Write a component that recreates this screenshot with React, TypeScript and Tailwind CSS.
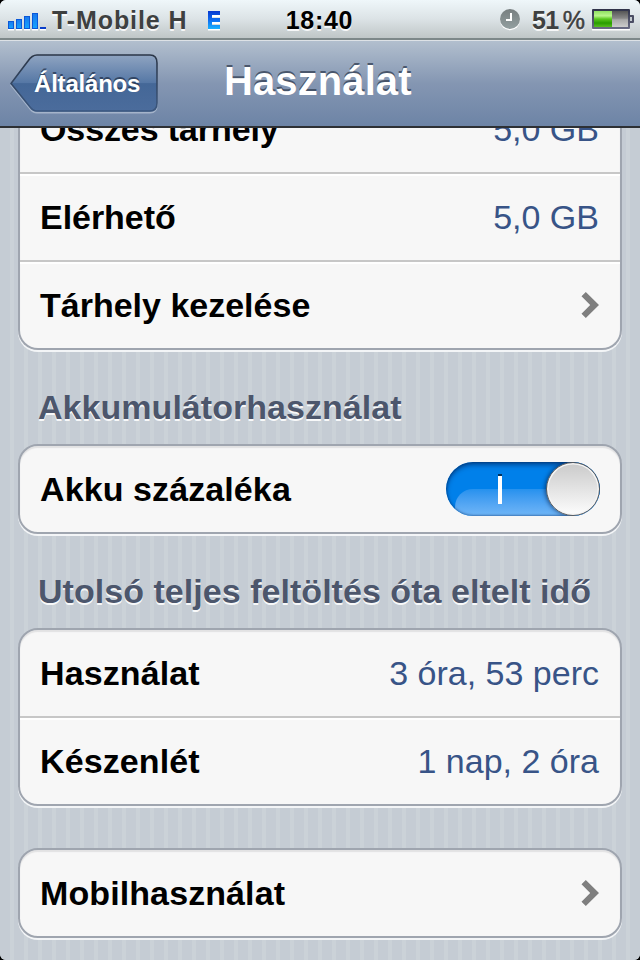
import type { ReactNode } from 'react';

function SignalBars() {
    return (
        <svg width="40" height="20" viewBox="0 0 40 20" className="shrink-0" aria-hidden="true">
            <defs>
                <linearGradient id="signal" x1="0" y1="0" x2="0" y2="1">
                    <stop offset="0" stopColor="#1a78ee" />
                    <stop offset="1" stopColor="#14a4ff" />
                </linearGradient>
            </defs>
            <path d="M0 17h6v1.5H0zM8 17h6v1.5H8zM16 17h6v1.5h-6zM24 17h6v1.5h-6zM32 17h6v1.5h-6z" fill="#fff" />
            <g fill="url(#signal)" stroke="#0a58d8" strokeWidth="1">
                <rect x="0.5" y="9.5" width="5" height="7" />
                <rect x="8.5" y="7.5" width="5" height="9" />
                <rect x="16.5" y="4.5" width="5" height="12" />
                <rect x="24.5" y="1.5" width="5" height="15" />
            </g>
            <rect x="32" y="15" width="6" height="2" fill="#0b3fca" />
        </svg>
    );
}

function EdgeIcon() {
    return (
        <svg width="12" height="20" viewBox="0 0 12 20" className="shrink-0" aria-hidden="true">
            <defs>
                <linearGradient id="edge" x1="0" y1="0" x2="0" y2="1">
                    <stop offset="0" stopColor="#0838cf" />
                    <stop offset="0.5" stopColor="#0d6cf0" />
                    <stop offset="1" stopColor="#19b2ff" />
                </linearGradient>
            </defs>
            <path d="M4 4h8v2H4zM4 11h8v2H4zM0 18h12v1.5H0z" fill="#fff" />
            <path d="M0 0h12v4H4v3h8v4H4v3h8v4H0z" fill="url(#edge)" />
        </svg>
    );
}

function ClockIcon() {
    return (
        <svg width="20" height="22" viewBox="0 0 20 22" className="shrink-0" aria-hidden="true">
            <defs>
                <linearGradient id="clock" x1="0" y1="0" x2="0" y2="1">
                    <stop offset="0" stopColor="#777f80" />
                    <stop offset="1" stopColor="#939fa0" />
                </linearGradient>
            </defs>
            <circle cx="10" cy="11.3" r="10" fill="#fff" />
            <circle cx="10" cy="10" r="10" fill="url(#clock)" />
            <path d="M11 4v7H6" fill="none" stroke="#fff" strokeWidth="2" />
        </svg>
    );
}

function BatteryIcon() {
    return (
        <svg width="42" height="22" viewBox="0 0 42 22" className="shrink-0" aria-hidden="true">
            <defs>
                <linearGradient id="charge" x1="0" y1="0" x2="0" y2="1">
                    <stop offset="0" stopColor="#8fe060" />
                    <stop offset="0.3" stopColor="#b9f58c" />
                    <stop offset="0.5" stopColor="#5ac71e" />
                    <stop offset="0.75" stopColor="#289c00" />
                    <stop offset="1" stopColor="#58bd20" />
                </linearGradient>
                <linearGradient id="empty" x1="0" y1="0" x2="0" y2="1">
                    <stop offset="0" stopColor="#555" />
                    <stop offset="0.45" stopColor="#888" />
                    <stop offset="0.55" stopColor="#aaa" />
                    <stop offset="1" stopColor="#ccc" />
                </linearGradient>
                <linearGradient id="shell" x1="0" y1="0" x2="0" y2="1">
                    <stop offset="0" stopColor="#2f3249" />
                    <stop offset="1" stopColor="#696b84" />
                </linearGradient>
            </defs>
            <path d="M0 19.5h38v2H0z" fill="#fff" />
            <rect x="37" y="6" width="5" height="8" rx="1" fill="#4b4e64" />
            <rect x="38" y="8" width="2" height="4" fill="#c4cbd0" />
            <rect width="38" height="20" rx="1" fill="url(#shell)" />
            <rect x="2" y="2" width="18" height="16" fill="url(#charge)" />
            <rect x="20" y="2" width="16" height="16" fill="url(#empty)" />
        </svg>
    );
}

function StatusBar() {
    return (
        <div className="flex h-10 items-start border-b-2 border-b-[#7d8889] bg-linear-to-b from-[#eff7fa] via-[#dce3e6] to-[#bfc6c7] text-[25px] leading-[40px] font-bold text-[#3e4040] [text-shadow:0_2px_0_rgba(255,255,255,0.85)]">
            <div className="flex w-[220px] pl-2">
                <div className="pt-3">
                    <SignalBars />
                </div>
                <span className="w-[160px] pl-1 tracking-[0.9px] whitespace-nowrap">T-Mobile H</span>
                <div className="pt-[11px]">
                    <EdgeIcon />
                </div>
            </div>
            <span className="w-[199px] text-center tracking-[0.7px] text-black">18:40</span>
            <div className="flex flex-1 justify-end pr-[6px]">
                <div className="pt-[9px]">
                    <ClockIcon />
                </div>
                <span className="w-[72px] pl-3 tracking-[-0.7px] whitespace-nowrap [word-spacing:-2px]">
                    51 <span className="font-normal [-webkit-text-stroke:0.5px_#3e4040]">%</span>
                </span>
                <div className="pt-[9px]">
                    <BatteryIcon />
                </div>
            </div>
        </div>
    );
}

function BackButton({ label }: { label: string }) {
    return (
        <button className="relative block h-[60px] w-[150px] text-left">
            <svg width="150" height="60" viewBox="0 0 150 60" className="absolute inset-0" aria-hidden="true">
                <defs>
                    <linearGradient id="back" x1="0" y1="0" x2="0" y2="1">
                        <stop offset="0" stopColor="#8fa4c1" />
                        <stop offset="0.5" stopColor="#5577a5" />
                        <stop offset="0.51" stopColor="#446797" />
                        <stop offset="1" stopColor="#4b6c9c" />
                    </linearGradient>
                    <linearGradient id="backEdge" x1="0" y1="0" x2="0" y2="1">
                        <stop offset="0" stopColor="#2b3647" />
                        <stop offset="1" stopColor="#3b577f" />
                    </linearGradient>
                </defs>
                <path
                    d="M27 1H140Q147 1 147 9V49Q147 57 140 57H27Q23 57 20 53L1 29.5L18 7Q22 1 27 1Z"
                    transform="translate(0 1.7)"
                    fill="none"
                    stroke="#a5b4ca"
                    strokeWidth="1.5"
                />
                <path
                    d="M27 1H140Q147 1 147 9V49Q147 57 140 57H27Q23 57 20 53L1 29.5L18 7Q22 1 27 1Z"
                    fill="url(#back)"
                    stroke="url(#backEdge)"
                    strokeWidth="1.6"
                />
            </svg>
            <span className="relative block pl-6 text-[24px] leading-[56px] font-bold tracking-[-0.2px] text-white [text-shadow:0_-2px_0_rgba(30,45,70,0.7)]">
                {label}
            </span>
        </button>
    );
}

function NavBar() {
    return (
        <header className="flex h-[88px] border-t border-b-2 border-t-[#dde2e6] border-b-[#2d3034] bg-linear-to-b from-[#b2bfce] via-[#8496b2] via-50% to-[#6d84a6] pt-[13px] pl-[10px]">
            <BackButton label="Általános" />
            <h1 className="pt-px pl-[64px] text-[40px] leading-[52px] font-bold tracking-[0.1px] text-white [text-shadow:0_-2px_0_rgba(50,62,82,0.75)]">
                Használat
            </h1>
        </header>
    );
}

function Group({ children, className = 'rounded-[20px] border-t-2' }: { children: ReactNode; className?: string }) {
    return (
        <section
            className={`mx-[18px] overflow-hidden border-x-2 border-b-2 border-[#9fa5af] bg-[#f7f7f7] shadow-[0_2px_0_#f3f5f7,inset_0_2px_1px_#e2e2e3] ${className}`}
        >
            {children}
        </section>
    );
}

interface RowProps {
    label: string;
    children: ReactNode;
    last?: boolean;
    tracking?: string;
}

function Row({ label, children, last = false, tracking = 'tracking-[0.1px]' }: RowProps) {
    return (
        <div
            className={`flex items-center justify-between px-5 [&+&]:shadow-[inset_0_2px_0_#fff] ${last ? 'h-[86px]' : 'h-[88px] border-b-2 border-[#c7c7c7]'}`}
        >
            <span className={`text-[34px] leading-[40px] font-bold text-black ${tracking}`}>{label}</span>
            {children}
        </div>
    );
}

function Value({ children }: { children: ReactNode }) {
    return <span className="pr-px text-[34px] leading-[40px] text-[#385487]">{children}</span>;
}

function Chevron() {
    return (
        <svg width="18" height="26" viewBox="0 0 18 26" className="mr-px" aria-hidden="true">
            <path d="M4.8 0L18 13L4.8 26L0.5 21.7L9.2 13L0.5 4.3Z" fill="#7f7f7f" />
        </svg>
    );
}

function GroupTitle({ children }: { children: ReactNode }) {
    return (
        <h2 className="h-[94px] pt-[37px] pl-[38px] text-[34px] leading-[40px] font-bold tracking-[0.04px] whitespace-nowrap text-[#4c566c] [text-shadow:0_2px_0_rgba(255,255,255,0.9)]">
            {children}
        </h2>
    );
}

function Switch() {
    return (
        <div
            role="switch"
            aria-checked="true"
            className="relative h-[54px] w-[154px] overflow-hidden rounded-full bg-[#0080ea]"
        >
            <div className="absolute top-[27px] left-[9px] h-[54px] w-[150px] rounded-tl-[18px] bg-linear-to-b from-[#2591ee] to-[#70b6f7] to-50%" />
            <div className="absolute inset-0 rounded-full shadow-[inset_0_3px_5px_rgba(0,35,90,0.6),inset_0_0_2px_1px_rgba(0,50,110,0.4)]" />
            <div className="absolute top-[14px] left-[52px] h-7 w-1 bg-white shadow-[0_-2px_0_#00335f]" />
            <div className="absolute top-0 right-0 size-[54px] rounded-full border border-[#5c5c5c] bg-linear-to-b from-[#cacaca] to-[#fdfdfd] shadow-[-1px_0_4px_rgba(0,20,60,0.6),inset_0_0_0_1.5px_#f4f4f4]" />
        </div>
    );
}

export default function App() {
    return (
        <div className="h-[960px] w-[640px] bg-black">
            <main className="flex h-full flex-col overflow-hidden rounded-[6px] bg-[#c5ccd4] font-['Liberation_Sans',Arial,sans-serif]">
                <StatusBar />
                <NavBar />
                <div className="flex-1 overflow-hidden bg-[repeating-linear-gradient(90deg,#c5ccd4_0_10px,#cbd2d8_10px_14px)]">
                    {/* The list is scrolled, so its first row starts under the bar */}
                    <Group className="-mt-[42px] rounded-b-[20px]">
                        <Row label="Összes tárhely" tracking="tracking-[-0.1px]">
                            <Value>5,0 GB</Value>
                        </Row>
                        <Row label="Elérhető" tracking="tracking-[-0.05px]">
                            <Value>5,0 GB</Value>
                        </Row>
                        <Row label="Tárhely kezelése" last tracking="tracking-normal">
                            <Chevron />
                        </Row>
                    </Group>

                    <GroupTitle>Akkumulátorhasználat</GroupTitle>
                    <Group>
                        <Row label="Akku százaléka" last>
                            <Switch />
                        </Row>
                    </Group>

                    <GroupTitle>Utolsó teljes feltöltés óta eltelt idő</GroupTitle>
                    <Group>
                        <Row label="Használat">
                            <Value>3 óra, 53 perc</Value>
                        </Row>
                        <Row label="Készenlét" last>
                            <Value>1 nap, 2 óra</Value>
                        </Row>
                    </Group>

                    <Group className="mt-[42px] rounded-[20px] border-t-2">
                        <Row label="Mobilhasználat" last>
                            <Chevron />
                        </Row>
                    </Group>
                </div>
            </main>
        </div>
    );
}
